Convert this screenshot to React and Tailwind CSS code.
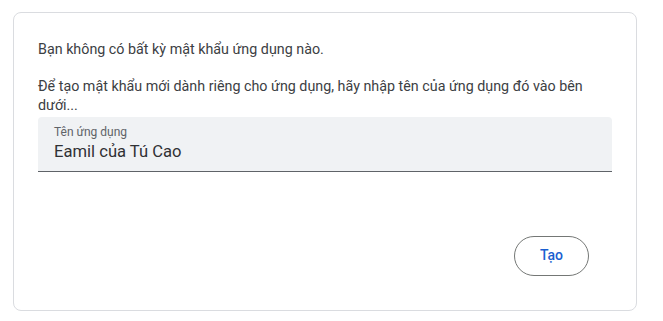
import React from 'react';

const App = () => {
  return (
    <div className="min-h-screen w-full bg-white pt-3 pl-[13px] pr-[26px] font-['Roboto',sans-serif]">
      {/* Card */}
      <div className="h-[299px] rounded-lg border border-[#dadce0] bg-white px-6 pt-[27px]">
        <p className="text-[14.3px] leading-[18.3px] text-[#3c4043] mb-[19px]">
          Bạn không có bất kỳ mật khẩu ứng dụng nào.
        </p>
        <p className="text-[14.3px] leading-[18.3px] text-[#3c4043]">
          Để tạo mật khẩu mới dành riêng cho ứng dụng, hãy nhập tên của ứng dụng đó vào bên dưới...
        </p>

        {/* Input */}
        <div className="mt-[3px] h-[55px] rounded-t bg-[#f0f2f4] border-b border-[#5f6368] px-4 pt-[7px]">
          <div className="text-[12px] leading-[16px] text-[#5f6368]">Tên ứng dụng</div>
          <div className="text-[16.6px] leading-[22px] text-[#303134] mt-[1px]">Eamil của Tú Cao</div>
        </div>

        {/* Actions */}
        <div className="mt-[64px] flex justify-end pr-[23px]">
          <button className="h-10 w-[75px] rounded-full border border-[#747775] text-[14px] font-medium text-[#1a5fd0]">
            Tạo
          </button>
        </div>
      </div>
    </div>
  );
};

export default App;
